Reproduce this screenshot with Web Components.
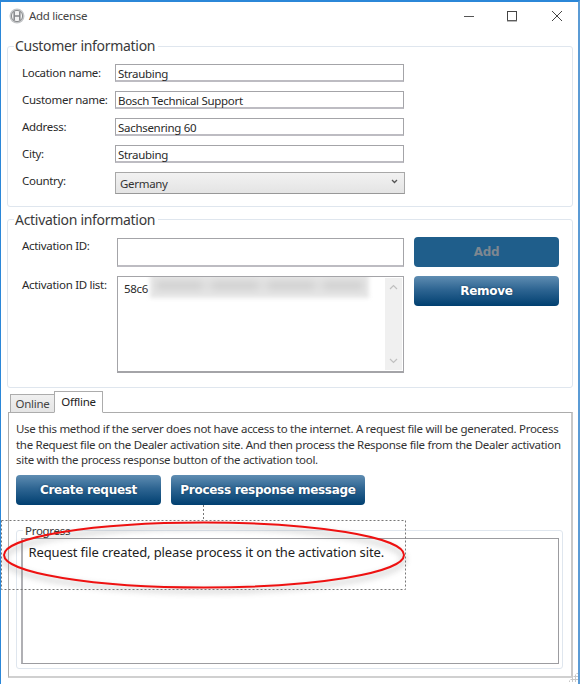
<!DOCTYPE html>
<html lang="en">
  <head>
    <meta charset="UTF-8" />
    <title>Add license</title>
    <style>
      html, body { margin: 0; padding: 0; background: #fff; }
      body { font: 11.5px/15.5px "Noto Sans", "Open Sans", sans-serif; letter-spacing: -0.3px; color: #2a2a2a; }
    </style>
  </head>
  <body>
    <template id="license-window">
      <style>
        :host { display: flex; flex-direction: column; position: relative; width: 580px; height: 684px; box-sizing: border-box; border-top: 2px solid #2b87d8; border-left: 1px solid #2b87d8; border-right: 2px solid #5b9bd5; overflow: hidden; background: #fff; }
        main { display: flex; flex-direction: column; padding: 17px 5px 0 6px; flex: 1; }
      </style>
      <slot name="title"></slot>
      <main><slot></slot></main>
      <slot name="over"></slot>
    </template>

    <template id="title-bar">
      <style>
        :host { display: flex; align-items: center; height: 27px; padding: 0 15px 0 8px; font-size: 11.5px; color: #444; }
        svg { display: block; }
        .name { margin-left: 4px; flex: 1; }
        .ctl { display: flex; align-items: center; }
      </style>
      <svg width="16" height="16" viewBox="0 0 16 16">
        <circle cx="8" cy="8" r="7.5" fill="#c4c6c8" />
        <circle cx="8" cy="8" r="5.6" fill="#f2f2f2" stroke="#8a8c8e" stroke-width="1" />
        <path d="M5.2 3.6v8.8M10.8 3.6v8.8M5.2 8h5.6" stroke="#85878a" stroke-width="1.5" fill="none" />
      </svg>
      <span class="name"><slot></slot></span>
      <div class="ctl">
        <svg width="12" height="12" viewBox="0 0 12 12"><path d="M1 6.5h10" stroke="#555" stroke-width="1" /></svg>
        <svg style="margin-left:31px" width="12" height="12" viewBox="0 0 12 12"><rect x="1.5" y="1.5" width="9" height="9" fill="none" stroke="#444" stroke-width="1" /><path d="M1 11h10" stroke="#777" /></svg>
        <svg style="margin-left:33px" width="12" height="12" viewBox="0 0 12 12"><path d="M1 1l10 10M11 1L1 11" stroke="#444" stroke-width="1" fill="none" /></svg>
      </div>
    </template>

    <template id="group-box">
      <style>
        :host { display: block; position: relative; box-sizing: border-box; border: 1.5px solid #dfe6ee; border-radius: 3px; background: #fff; }
        .legend { position: absolute; left: 6px; top: var(--legend-top, -11px); padding: 0 3px 0 1px; background: #fff; font-size: 14px; line-height: 20px; color: #3a3a3a; white-space: nowrap; }
      </style>
      <div class="legend"></div>
      <slot></slot>
    </template>

    <template id="text-field">
      <style>
        :host { display: block; box-sizing: border-box; height: 18px; border: 1px solid #a4a4a8; border-bottom: 2px solid #bdbcc2; background: #fff; padding: 0 2px; line-height: 17px; color: #2a2a2a; white-space: nowrap; }
      </style>
      <slot></slot>
    </template>

    <template id="combo-field">
      <style>
        :host { display: flex; align-items: center; justify-content: space-between; box-sizing: border-box; height: 22px; margin-right: -1px; border: 1px solid #a8a8a8; border-bottom-color: #989898; background: linear-gradient(#f2f2f2, #e4e4e4); padding: 1px 6px 0 4px; color: #333; }
        svg { margin-top: -5px; }
      </style>
      <slot></slot>
      <svg width="7" height="5" viewBox="0 0 7 5"><path d="M1 1l2.5 2.5L6 1" fill="none" stroke="#555" stroke-width="1.3" /></svg>
    </template>

    <template id="id-list">
      <style>
        :host { display: flex; box-sizing: border-box; height: 97px; border: 1px solid #a4a4a8; border-bottom-width: 2px; background: #fff; }
        .body { flex: 1; position: relative; overflow: hidden; padding: 3px 0 0 6px; line-height: 17px; }
        .smudge { position: absolute; left: 32px; top: -4px; width: 219px; height: 25px; background: #e6e6e6; filter: blur(2px); }
        .smudge::after { content: ""; position: absolute; inset: 8px 6px; background: repeating-linear-gradient(90deg, #d0d0d0 0 46px, #dedede 46px 56px); filter: blur(3px); }
        .bar { width: 17px; margin: 1px; display: flex; flex-direction: column; justify-content: space-between; align-items: center; padding: 6px 0; background: #f0f0f0; }
        svg { display: block; }
      </style>
      <div class="body"><slot></slot><div class="smudge"></div></div>
      <div class="bar">
        <svg width="9" height="6" viewBox="0 0 9 6"><path d="M1 5l3.5-3.5L8 5" fill="none" stroke="#c0c0c0" stroke-width="1.2" /></svg>
        <svg width="9" height="6" viewBox="0 0 9 6"><path d="M1 1l3.5 3.5L8 1" fill="none" stroke="#c0c0c0" stroke-width="1.2" /></svg>
      </div>
    </template>

    <template id="blue-button">
      <style>
        :host { display: flex; align-items: center; justify-content: center; box-sizing: border-box; height: 30px; border-radius: 4px; background: linear-gradient(#5f8db2, #2e6592 45%, #003f70); color: #fff; font: bold 12px "DejaVu Sans", "Liberation Sans", sans-serif; letter-spacing: -0.3px; text-shadow: 0 0 2px rgba(10, 40, 70, .7); white-space: nowrap; }
        :host([disabled]) { background: #1f5e8b; color: #7d8791; text-shadow: none; }
      </style>
      <slot></slot>
    </template>

    <template id="customer-form">
      <style>
        :host { display: grid; grid-template-columns: 93px 289px; row-gap: 9px; padding: 17px 0 11px 14px; align-items: center; }
      </style>
      <slot></slot>
    </template>

    <template id="activation-form">
      <style>
        :host { display: grid; grid-template-columns: 95px 287px 155px; grid-template-rows: 30px 97px; row-gap: 9px; padding: 17px 0 12px 14px; }
        ::slotted(.act) { margin-left: 10px; }
        ::slotted(.top) { align-self: start; }
      </style>
      <slot></slot>
    </template>

    <template id="tab-strip">
      <style>
        :host { display: flex; align-items: flex-end; height: 24px; margin-left: 3px; margin-top: 1px; position: relative; z-index: 1; margin-bottom: -1px; }
        span { box-sizing: border-box; display: flex; align-items: center; justify-content: center; border: 1px solid #acacac; }
        .off { width: 44px; height: 19px; background: linear-gradient(#f0f0f0, #e5e5e5); border-right: 0; color: #444; }
        .on { width: 49px; height: 22px; background: #fff; border-bottom-color: #fff; color: #222; }
      </style>
      <span class="off">Online</span><span class="on">Offline</span>
    </template>

    <template id="tab-panel">
      <style>
        :host { display: block; box-sizing: border-box; width: 565px; height: 266px; margin-left: 1px; border: 1px solid #acacac; border-bottom: 2px solid #d0d0d0; border-right: 2px solid #c8c8c8; padding: 8px 0 0 7px; }
      </style>
      <slot></slot>
    </template>

    <template id="progress-box">
      <style>
        :host { display: block; position: relative; box-sizing: border-box; width: 547px; height: 139px; margin: 25px 0 0 0; border: 1.5px solid #dfe6ee; border-radius: 3px; padding: 7px 3px 4px 3.5px; }
        .legend { position: absolute; left: 6px; top: -8px; padding: 0 2px; background: #fff; line-height: 15px; color: #333; }
        .log { box-sizing: border-box; height: 126px; border: 1px solid #9c9ca0; border-left-width: 2px; border-left-color: #b0b0b4; padding: 3px 6px; font-size: 13px; letter-spacing: -0.12px; line-height: 20px; color: #222; background: #fff; }
      </style>
      <div class="legend">Progress</div>
      <div class="log"><slot></slot></div>
    </template>

    <template id="call-out">
      <style>
        :host { display: block; position: absolute; left: -1px; top: -2px; width: 580px; height: 684px; pointer-events: none; }
        svg { display: block; }
      </style>
      <svg width="580" height="684" viewBox="0 0 580 684">
        <defs>
          <filter id="sh" x="-5%" y="-20%" width="110%" height="150%">
            <feGaussianBlur stdDeviation="3" />
          </filter>
        </defs>
        <path d="M1.5 520.5H405.5V589.5H1.5ZM203.5 505V520" fill="none" stroke="#777" stroke-width="1" stroke-dasharray="2 2" />
        <ellipse cx="204" cy="559" rx="200" ry="32" fill="none" stroke="#777" stroke-width="3" opacity=".45" filter="url(#sh)" />
        <ellipse cx="204" cy="555" rx="200" ry="32.5" fill="none" stroke="#ee1111" stroke-width="2" />
      </svg>
    </template>

    <template id="size-grip">
      <style>
        :host { display: block; position: absolute; right: 0; bottom: 2px; width: 10px; height: 10px; background-image: radial-gradient(#c8c8c8 1px, transparent 1.2px); background-size: 3px 3px; clip-path: polygon(100% 0, 100% 100%, 0 100%); }
      </style>
    </template>

    <license-window>
      <title-bar slot="title">Add license</title-bar>

      <group-box legend="Customer information" style="height:161px">
        <customer-form>
          <span>Location name:</span><text-field>Straubing</text-field>
          <span>Customer name:</span><text-field>Bosch Technical Support</text-field>
          <span>Address:</span><text-field>Sachsenring 60</text-field>
          <span>City:</span><text-field>Straubing</text-field>
          <span style="margin-top:-4px">Country:</span><combo-field>Germany</combo-field>
        </customer-form>
      </group-box>

      <group-box legend="Activation information" style="height:169px;margin-top:12px;--legend-top:-10px">
        <activation-form>
          <span class="top" style="margin-top:1px">Activation ID:</span>
          <text-field style="height:29px;margin-top:1px"></text-field>
          <blue-button class="act" disabled>Add</blue-button>
          <span class="top" style="margin-top:1px">Activation ID list:</span>
          <id-list>58c6</id-list>
          <blue-button class="act top">Remove</blue-button>
        </activation-form>
      </group-box>

      <tab-strip></tab-strip>
      <tab-panel>
        <div style="white-space:nowrap;color:#333">Use this method if the server does not have access to the internet. A request file will be generated. Process<br>the Request file on the Dealer activation site. And then process the Response file from the Dealer activation<br>site with the process response button of the activation tool.</div>
        <div style="display:flex;gap:10px;margin-top:7px">
          <blue-button style="width:145px">Create request</blue-button>
          <blue-button style="width:194px">Process response message</blue-button>
        </div>
        <progress-box>Request file created, please process it on the activation site.</progress-box>
      </tab-panel>

      <call-out slot="over"></call-out>
      <size-grip slot="over"></size-grip>
    </license-window>

    <script>
      // plain elements: clone the template with the tag's own name
      const plain = ['license-window', 'title-bar', 'text-field', 'combo-field', 'id-list', 'blue-button',
        'customer-form', 'activation-form', 'tab-strip', 'tab-panel', 'progress-box', 'call-out', 'size-grip'];
      plain.forEach((name) => {
        const template = document.getElementById(name);
        customElements.define(name, class extends HTMLElement {
          constructor() {
            super();
            this.attachShadow({ mode: 'open' }).appendChild(template.content.cloneNode(true));
          }
        });
      });

      customElements.define('group-box', class extends HTMLElement {
        constructor() {
          super();
          this.attachShadow({ mode: 'open' }).appendChild(document.getElementById('group-box').content.cloneNode(true));
        }
        connectedCallback() {
          this.shadowRoot.querySelector('.legend').textContent = this.getAttribute('legend');
        }
      });
    </script>
  </body>
</html>
